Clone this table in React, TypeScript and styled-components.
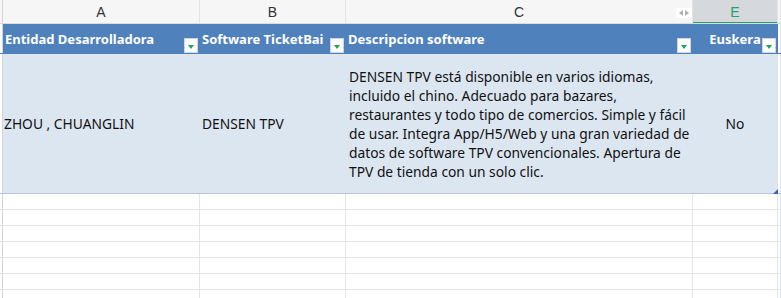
import React from "react";
import styled, { createGlobalStyle } from "styled-components";

const Global = createGlobalStyle`
  html, body { margin: 0; padding: 0; background: #ffffff; }
  body { font-family: "Noto Sans", "Open Sans", sans-serif; overflow: hidden; }
`;

const COLS = "3px 197px 146px 347px 85px 1fr";

const Sheet = styled.div`
  width: 781px;
  height: 298px;
  overflow: hidden;
  background: #fff;
`;

const Row = styled.div<{ $h: number; $line: string; $bg?: string }>`
  display: grid;
  grid-template-columns: ${COLS};
  height: ${(p) => p.$h}px;
  box-sizing: border-box;
  border-bottom: 1px solid ${(p) => p.$line};
  background: ${(p) => p.$bg || "transparent"};
`;

const LetterCell = styled.div<{ $active?: boolean }>`
  position: relative;
  display: flex;
  align-items: center;
  justify-content: center;
  border-right: 1px solid #e3e3e3;
  background: ${(p) => (p.$active ? "#d5d8dd" : "#f6f6f6")};
  color: ${(p) => (p.$active ? "#21a366" : "#333")};
  font-family: "Liberation Sans", Arial, sans-serif;
  font-size: 14px;
  box-shadow: ${(p) => (p.$active ? "inset 0 -1px 0 #21a366" : "none")};
`;

const Gutter = styled.div<{ $bg?: string }>`
  border-right: 1px solid #d4d4d4;
  background: ${(p) => p.$bg || "#f6f6f6"};
`;

const HeadCell = styled.div<{ $center?: boolean }>`
  position: relative;
  display: flex;
  align-items: center;
  justify-content: ${(p) => (p.$center ? "center" : "flex-start")};
  padding: 0 0 0 ${(p) => (p.$center ? 0 : 2)}px;
  color: #fff;
  font-weight: 700;
  font-size: 13px;
  white-space: nowrap;
  border-right: 1px solid #4f81bd;
`;

const FilterBtn = styled.span`
  position: absolute;
  right: 1px;
  bottom: 0;
  width: 14px;
  height: 15px;
  box-sizing: border-box;
  background: #fff;
  border: 1px solid #cfd6e2;
  display: flex;
  align-items: center;
  justify-content: center;
  &::after {
    content: "";
    width: 0;
    height: 0;
    margin-top: 2px;
    border-left: 3.5px solid transparent;
    border-right: 3.5px solid transparent;
    border-top: 4px solid #1ea55a;
  }
`;

const DataCell = styled.div<{ $center?: boolean; $pad?: number }>`
  position: relative;
  display: flex;
  align-items: center;
  justify-content: ${(p) => (p.$center ? "center" : "flex-start")};
  padding-left: ${(p) => p.$pad ?? 2}px;
  color: #111;
  font-size: 13.8px;
  line-height: 19px;
  border-right: 1px solid #dce6f1;
`;

const Wrap = styled.div`
  max-width: 341px;
`;

const EmptyCell = styled.div`
  border-right: 1px solid #e1e4ec;
`;

const Hidden = styled.span`
  position: absolute;
  left: -17px;
  top: 8px;
  width: 16px;
  height: 10px;
  background: #fff;
  border-radius: 2px;
  display: flex;
  align-items: center;
  justify-content: center;
  gap: 2px;
`;

const Tri = styled.span<{ $dir: "l" | "r" }>`
  width: 0;
  height: 0;
  border-top: 3px solid transparent;
  border-bottom: 3px solid transparent;
  ${(p) => (p.$dir === "l" ? "border-right: 4px solid #b0b0b0;" : "border-left: 4px solid #b0b0b0;")}
`;

const Handle = styled.span`
  position: absolute;
  right: -1px;
  bottom: -1px;
  width: 5px;
  height: 5px;
  background: #3d5fb8;
  clip-path: polygon(100% 0, 100% 100%, 0 100%);
`;

export default function App() {
  const empties = Array.from({ length: 7 });
  return (
    <Sheet>
      <Global />
      <Row $h={24} $line="#dcdcdc">
        <Gutter />
        <LetterCell>A</LetterCell>
        <LetterCell>B</LetterCell>
        <LetterCell>C</LetterCell>
        <LetterCell $active>
          <Hidden>
            <Tri $dir="l" />
            <Tri $dir="r" />
          </Hidden>
          E
        </LetterCell>
        <LetterCell />
      </Row>
      <Row $h={30} $line="#4f81bd" $bg="#4f81bd">
        <Gutter $bg="#fff" />
        <HeadCell>
          Entidad Desarrolladora
          <FilterBtn />
        </HeadCell>
        <HeadCell>
          Software TicketBai
          <FilterBtn />
        </HeadCell>
        <HeadCell>
          Descripcion software
          <FilterBtn />
        </HeadCell>
        <HeadCell $center>
          Euskera
          <FilterBtn />
        </HeadCell>
        <EmptyCell style={{ background: "#fff" }} />
      </Row>
      <Row $h={140} $line="#b7c6dd" $bg="#dce6f1">
        <Gutter $bg="#fff" />
        <DataCell $pad={1}>ZHOU , CHUANGLIN</DataCell>
        <DataCell>DENSEN TPV</DataCell>
        <DataCell $pad={3}>
          <Wrap>
            DENSEN TPV está disponible en varios idiomas, incluido el chino. Adecuado para bazares,
            restaurantes y todo tipo de comercios. Simple y fácil de usar. Integra App/H5/Web y una
            gran variedad de datos de software TPV convencionales. Apertura de TPV de tienda con un
            solo clic.
          </Wrap>
        </DataCell>
        <DataCell $center $pad={0}>
          No
          <Handle />
        </DataCell>
        <EmptyCell style={{ background: "#fff" }} />
      </Row>
      {empties.map((_, i) => (
        <Row key={i} $h={16} $line="#e1e4ec">
          <Gutter $bg="#fff" />
          <EmptyCell />
          <EmptyCell />
          <EmptyCell />
          <EmptyCell />
          <EmptyCell />
        </Row>
      ))}
    </Sheet>
  );
}
